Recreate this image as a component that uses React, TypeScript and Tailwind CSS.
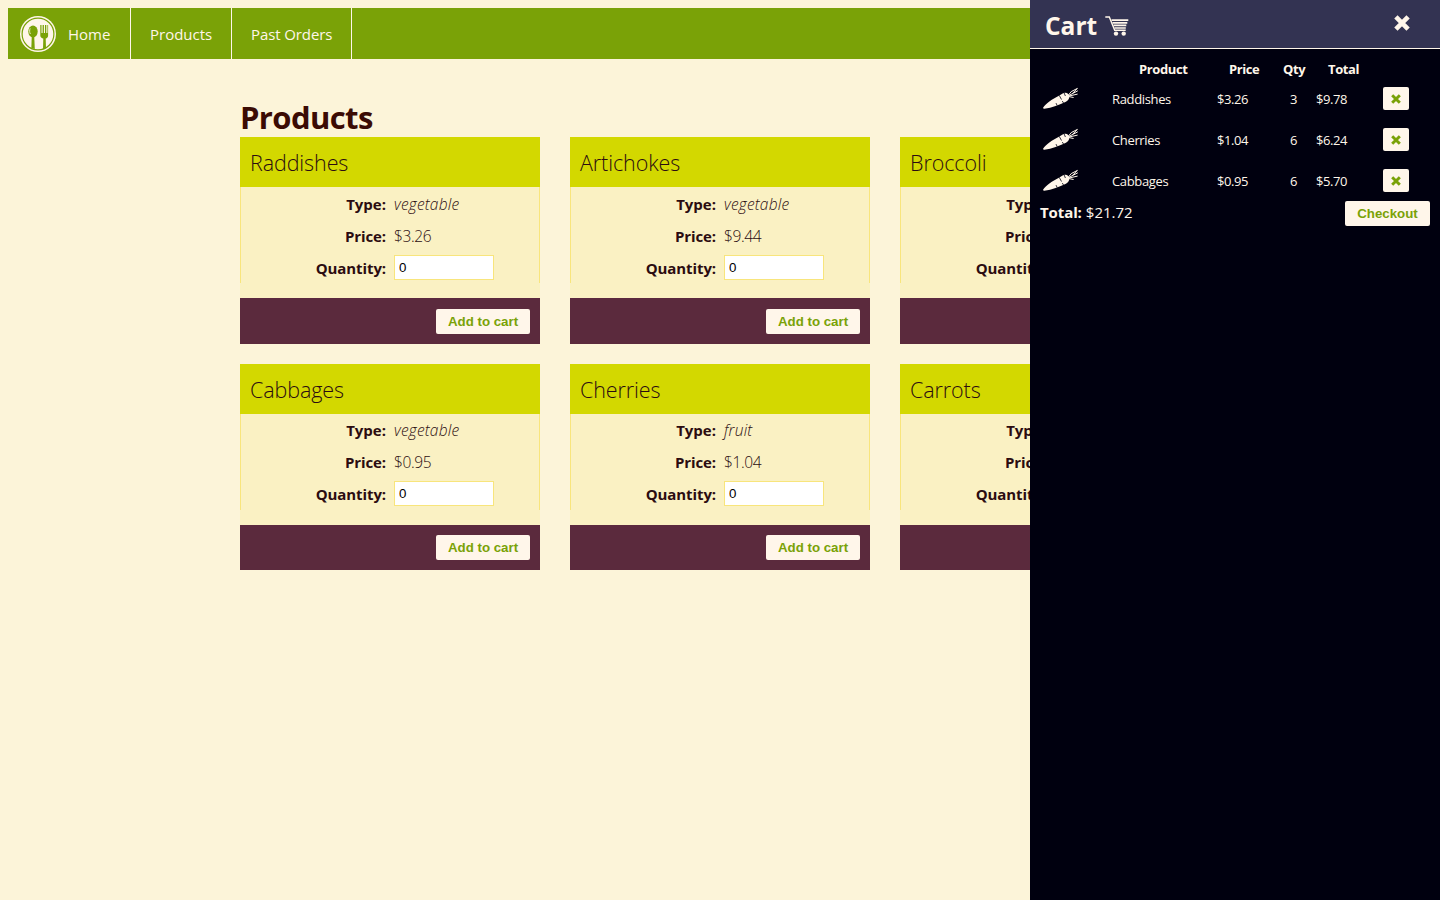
type Product = { name: string; type: string; price: string };

const products: Product[] = [
  { name: "Raddishes", type: "vegetable", price: "$3.26" },
  { name: "Artichokes", type: "vegetable", price: "$9.44" },
  { name: "Broccoli", type: "vegetable", price: "$2.10" },
  { name: "Cabbages", type: "vegetable", price: "$0.95" },
  { name: "Cherries", type: "fruit", price: "$1.04" },
  { name: "Carrots", type: "vegetable", price: "$1.50" },
];

const cartItems = [
  { name: "Raddishes", price: "$3.26", qty: 3, total: "$9.78" },
  { name: "Cherries", price: "$1.04", qty: 6, total: "$6.24" },
  { name: "Cabbages", price: "$0.95", qty: 6, total: "$5.70" },
];

function PlateLogo() {
  return (
    <svg className="block h-9 w-9" viewBox="0 0 36 36">
      <circle cx="18" cy="18" r="18" fill="#fff6ea" />
      <circle cx="18" cy="18" r="15.9" fill="none" stroke="#7aa207" strokeWidth="1.2" />
      <ellipse cx="13" cy="15.4" rx="4.7" ry="6" fill="#7aa207" />
      <path d="M11.8 20h2.4l.6 13-3.5-.8z" fill="#7aa207" />
      <path d="M10.2 12.4c-.8 1.6-.8 4 .2 5.6" fill="none" stroke="#e8ecc0" strokeWidth="1" />
      <path d="M20.3 9h1.2v8h1.1V9h1.3v8h1.1V9h1.3v8h1.1V9h.7v10.5c0 1.8-1 2.7-2.4 3.1l.3 9.6-3 1 .3-10.6c-1.6-.4-3-1.4-3-3.1z" fill="#7aa207" />
    </svg>
  );
}

function CartIcon() {
  return (
    <svg className="block h-5 w-6" viewBox="0 0 24 20">
      <path d="M.3 1h4l5.4 13.300h11" fill="none" stroke="#fff6ea" strokeWidth="1.4" />
      <path d="M6.500 4.100h16.800M7.500 6.800h14.800M8.500 9.400h12.800M9.500 12h11.300" stroke="#fff6ea" strokeWidth="1.7" />
      <circle cx="11" cy="17.600" r="2.200" fill="#fff6ea" />
      <circle cx="18.700" cy="17.600" r="2.200" fill="#fff6ea" />
    </svg>
  );
}

function CrossIcon({ className }: { className: string }) {
  return (
    <svg className={className} viewBox="0 0 16 16" fill="none" stroke="currentColor" strokeWidth="4.700">
      <path d="M1.900 1.900l12.200 12.200M14.100 1.900L1.900 14.100" />
    </svg>
  );
}

function CarrotIcon() {
  return (
    <svg className="block h-[22px] w-9" viewBox="0 0 36 22">
      <path d="M.2 20.600C3 16.300 9 12.200 15 9.200c2.500-1.500 4.300-3 6.800-3.500 2.200-.4 4.200 1.300 4.500 3.400.3 2.500-1.200 4.500-3.900 5.800C16.700 17.600 9 20.600 1.300 21.800.3 21.900-.1 21.200.2 20.600z" fill="#fff6ea" />
      <path d="M25.200 8.400l3-3.800 6.200-3.200-4.600 4.700M26 9l8.600-1.900M26 8.400l8.800-4.600M26 9.600l4.600.9" fill="none" stroke="#fff6ea" strokeWidth="1" />
      <path d="M16.200 8.300l2.300 4.200M21 5.700l1.400 3.300M14.200 18.600l-1.200-2.500M20.500 16l-1.200-2" stroke="#00000f" strokeWidth=".8" />
    </svg>
  );
}

function ProductCard({ product }: { product: Product }) {
  return (
    <article className="w-[300px]">
      <h2 className="h-[50px] bg-[#d3d800] pl-[10px] text-[21.5px] leading-[52px] font-[340]">
        <span className="tracking-[-0.1px]">{product.name}</span>
      </h2>
      <div className="h-[111px] bg-[#faf1c3]">
        <div className="h-24 border-x border-[#f8e57c] pt-px text-[15px]">
          <div className="flex h-8 items-center gap-2">
            <b className="w-[145px] text-right">Type:</b>
            <i className="text-[15.5px] font-[350] tracking-[0.2px]">{product.type}</i>
          </div>
          <div className="flex h-8 items-center gap-2">
            <b className="w-[145px] text-right tracking-[-0.1px]">Price:</b>
            <span className="text-[15.5px] font-[350] tracking-[-0.4px]">{product.price}</span>
          </div>
          <div className="flex h-8 items-center gap-2">
            <b className="w-[145px] text-right tracking-[-0.1px]">Quantity:</b>
            <input
              className="-mt-[2px] h-[25px] w-[100px] border border-[#f8e57c] bg-white pl-1 font-['Liberation_Sans',sans-serif] text-[13.3px] text-black outline-none"
              defaultValue="0"
            />
          </div>
        </div>
      </div>
      <footer className="flex h-[45.4px] justify-end bg-[#5b2a3d] pt-[10.3px] pr-[10px]">
        <button className="h-[25px] w-[94px] rounded-[2px] bg-[#fff6ea] pt-px font-['Liberation_Sans',sans-serif] text-[13.3px] font-bold text-[#7aa207]">
          Add to cart
        </button>
      </footer>
    </article>
  );
}

function CartPanel() {
  return (
    <aside className="absolute top-0 right-0 h-[900px] w-[410px] bg-[#00000f] text-[#fff6ea]">
      <header className="flex h-[49px] justify-between border-b border-[#fff6ea] bg-[#333352] pr-[30px] pl-[15px]">
        <h2 className="flex gap-[9px] text-[24.5px] leading-[52px] font-bold">
          <span className="w-[51px]">Cart</span>
          <span className="pt-4">
            <CartIcon />
          </span>
        </h2>
        <button className="h-4 pt-[15px] text-[#fff6ea]">
          <CrossIcon className="block h-4 w-4" />
        </button>
      </header>
      <div className="pt-3 text-[13px]">
        <div className="flex h-[18px] items-center font-bold tracking-[-0.4px]">
          <span className="ml-[109px] w-[90px]">Product</span>
          <span className="w-[54px]">Price</span>
          <span className="w-[45px]">Qty</span>
          <span>Total</span>
        </div>
        {cartItems.map((item) => (
          <div key={item.name} className="flex h-[41px] items-start tracking-[-0.4px]">
            <span className="w-[69px] pt-2 pl-[13px]">
              <CarrotIcon />
            </span>
            <span className="w-[118px] pt-[10px] pl-[13px] leading-5 tracking-[-0.35px]">{item.name}</span>
            <span className="w-[73px] pt-[10px] leading-5">{item.price}</span>
            <span className="w-[26px] pt-[10px] leading-5">{item.qty}</span>
            <span className="w-[67px] pt-[10px] leading-5">{item.total}</span>
            <button className="mt-2 flex h-[23px] w-[26px] items-center justify-center rounded-[2px] bg-[#fff6ea] text-[#7aa207]">
              <CrossIcon className="h-[10px] w-[10px]" />
            </button>
          </div>
        ))}
      </div>
      <div className="-mt-px flex items-start justify-between pr-[10px] pl-[10px] text-[15px] leading-[23px]">
        <div className="flex gap-1">
          <b className="tracking-[-0.1px]">Total:</b>
          <span>$21.72</span>
        </div>
        <button className="h-[25px] w-[85px] rounded-[2px] bg-[#fff6ea] font-['Liberation_Sans',sans-serif] text-[13.3px] font-bold text-[#7aa207]">
          Checkout
        </button>
      </div>
    </aside>
  );
}

export default function App() {
  return (
    <div className="relative h-[900px] w-[1440px] overflow-hidden bg-[#fcf4d9] p-2 font-['Open_Sans','Noto_Sans',sans-serif] text-[#2b0c10]">
      <nav className="flex h-[51px] bg-[#7aa207] text-[15px] leading-[52px] text-[#fff6ea]">
        <a className="flex w-[123px] items-start border-r border-[#fff6ea] pl-3">
          <span className="mr-3 pt-2">
            <PlateLogo />
          </span>
          <span>Home</span>
        </a>
        <a className="w-[101px] border-r border-[#fff6ea] pl-[19px] whitespace-nowrap">Products</a>
        <a className="w-[120px] border-r border-[#fff6ea] pl-[19px] tracking-[-0.1px] whitespace-nowrap">Past Orders</a>
      </nav>
      <main className="ml-[232px] w-[960px] pt-9">
        <h1 className="h-[42.3px] text-[31px] leading-[44px] font-bold tracking-[-0.6px] text-[#3b0b04]">Products</h1>
        <div className="grid grid-cols-3 gap-x-[30px] gap-y-5">
          {products.map((product) => (
            <ProductCard key={product.name} product={product} />
          ))}
        </div>
      </main>
      <CartPanel />
    </div>
  );
}
